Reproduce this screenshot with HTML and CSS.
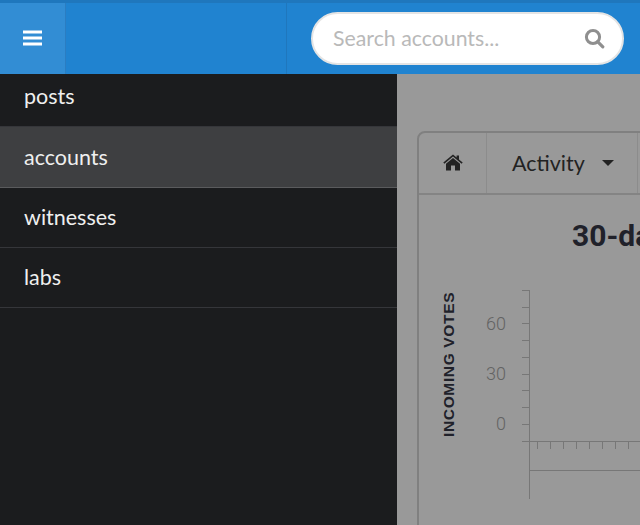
FILE: index.html
```html
<!DOCTYPE html>
<html lang="en">
<head>
<meta charset="utf-8">
<title>Accounts</title>
<link rel="stylesheet" href="styles.css">
</head>
<body>
<header class="topbar">
  <button class="menu-btn" aria-label="Menu">
    <svg width="19" height="16" viewBox="0 0 19 16"><path class="white" d="M0 0.500h19v3H0zM0 6.500h19v3H0zM0 12.500h19v3H0z"/></svg>
  </button>
  <div class="spacer"></div>
  <div class="search-wrap">
    <div class="search">
      <span class="placeholder">Search accounts...</span>
      <svg class="search-icon" width="21" height="21" viewBox="0 0 21 21"><circle cx="9" cy="9" r="6.6" fill="none" stroke="#8f8f8f" stroke-width="3"/><path d="M13.6 13.6l5.2 5.2" stroke="#8f8f8f" stroke-width="3.2" stroke-linecap="round"/></svg>
    </div>
  </div>
</header>
<div class="body">
  <nav class="sidebar">
    <a class="item first">posts</a>
    <a class="item active">accounts</a>
    <a class="item">witnesses</a>
    <a class="item">labs</a>
  </nav>
  <main class="main">
    <section class="panel">
      <div class="tabs">
        <div class="tab home">
          <svg width="20" height="17" viewBox="0 0 20 17"><path class="dark" d="M10 0.4L13.6 3.4V1.6H16V5.4L19.7 8.5L18.6 9.7L10 2.6L1.4 9.7L0.3 8.5ZM10 4L17 9.7V16.5H12V11.500H8V16.5H3V9.7Z"/></svg>
        </div>
        <div class="tab activity">Activity<span class="caret"></span></div>
        <div class="tab rest"></div>
      </div>
      <h2 class="title">30-day activity</h2>
      <div class="chart">
        <span class="y-title">INCOMING VOTES</span>
        <svg class="plot" width="222" height="215" viewBox="0 0 222 215">
          <g class="axis">
            <path d="M111.500 5V214"/>
            <path d="M104 5.500h8M104 22.500h8M104 38.500h8M104 55.500h8M104 72.500h8M104 89.500h8M104 105.500h8M104 122.500h8M104 139.500h8M104 156.500h118"/>
            <path d="M119.500 156v8M132.500 156v8M145.500 156v8M158.500 156v8M171.500 156v8M184.500 156v8M197.500 156v8M210.500 156v8"/>
            <path d="M111 185.500h111"/>
          </g>
          <text class="tick" x="88" y="45" text-anchor="end">60</text>
          <text class="tick" x="88" y="95" text-anchor="end">30</text>
          <text class="tick" x="88" y="145" text-anchor="end">0</text>
        </svg>
      </div>
    </section>
  </main>
</div>
</body>
</html>
```
FILE: styles.css
```css
* { box-sizing: border-box; }
html, body { margin: 0; height: 100%; }
body {
  width: 640px;
  height: 525px;
  overflow: hidden;
  display: flex;
  flex-direction: column;
  font-family: Lato, "Liberation Sans", sans-serif;
  background: #999;
}
.topbar {
  height: 74px;
  flex: none;
  display: flex;
  background: #2083d0;
  border-top: 3px solid #1f77bd;
}
.menu-btn {
  width: 66px;
  border: 0;
  border-right: 1px solid #2a7dc2;
  background: #328dd4;
  display: flex;
  align-items: center;
  justify-content: center;
  padding: 0 0 2px;
}
.white { fill: #fff; }
.spacer { width: 221px; border-right: 1px solid #1f77bd; }
.search-wrap { flex: 1; padding: 9px 16px 0 24px; }
.search {
  height: 53px;
  width: 313px;
  border-radius: 27px;
  background: #fff;
  border: 2px solid #e4e4e4;
  display: flex;
  align-items: center;
  justify-content: space-between;
  padding: 0 17px 2px 20px;
}
.placeholder { font-size: 21.3px; color: #b9b9b9; }
.search-icon { display: block; margin-top: 2px; }
.body { flex: 1; display: flex; min-height: 0; }
.sidebar { width: 397px; flex: none; background: #1b1c1e; }
.item {
  display: flex;
  align-items: center;
  height: 60px;
  padding: 0 0 1px 24px;
  font-size: 21.5px;
  color: #efefef;
  border-bottom: 1px solid #35363a;
}
.item.first { height: 53px; padding-bottom: 8px; }
.item.active { background: #3e3f41; border-bottom-color: #5a5b5d; height: 61px; padding-bottom: 0; }
.main { flex: 1; padding: 57px 0 0 20px; overflow: hidden; min-width: 0; }
.panel {
  width: 600px;
  height: 420px;
  border: 2px solid #808080;
  border-radius: 8px 0 0 0;
}
.tabs { height: 62px; display: flex; border-bottom: 2px solid #848484; }
.tab { display: flex; align-items: center; border-right: 1px solid #8c8c8c; padding-bottom: 1px; }
.home { width: 68px; justify-content: center; }
.dark { fill: #232323; }
.activity {
  width: 151px;
  padding-left: 25px;
  font-size: 21.5px;
  color: #222;
}
.caret {
  margin-left: 17px;
  border-left: 6px solid transparent;
  border-right: 6px solid transparent;
  border-top: 6px solid #222;
}
.rest { flex: 1; border-right: 0; }
.title {
  margin: 23px 0 0;
  padding-left: 153px;
  font-family: Roboto, "Liberation Sans", sans-serif;
  font-weight: 700;
  font-size: 30px;
  line-height: 36px;
  color: #20212a;
  white-space: nowrap;
}
.chart { display: flex; align-items: flex-start; margin-top: 16px; }
.y-title {
  writing-mode: vertical-rl;
  transform: rotate(180deg);
  font-family: "Liberation Sans", sans-serif;
  font-weight: 700;
  font-size: 15.5px;
  line-height: 16px;
  letter-spacing: 0.65px;
  color: #20212a;
  margin: 21px 0 0 22px;
  height: 146px;
  text-align: left;
  white-space: nowrap;
}
.plot { margin-left: -39px; margin-top: 15px; flex: none; }
.axis path { fill: none; stroke: #777; stroke-width: 1; }
.tick { font-family: Roboto, sans-serif; font-size: 18px; font-weight: 300; fill: #636363; }
```
